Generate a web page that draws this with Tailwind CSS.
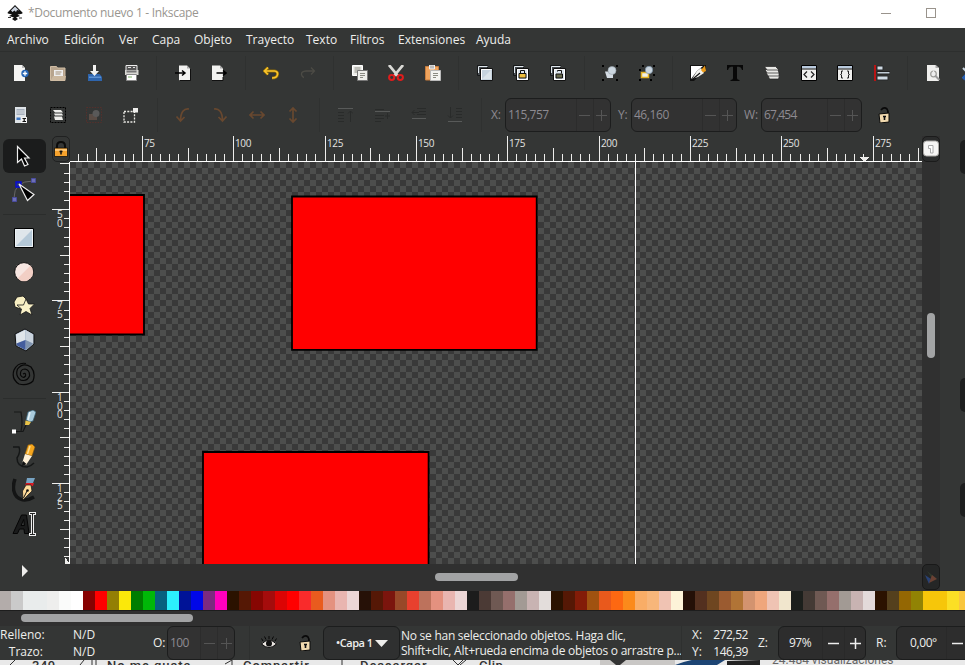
<!DOCTYPE html>
<html lang="es">
<head>
<meta charset="utf-8">
<title>Inkscape</title>
<script src="https://cdn.jsdelivr.net/npm/@tailwindcss/browser@4"></script>
</head>
<body class="w-[965px] h-[665px] overflow-hidden bg-[#343635] text-[#eeeeec] font-['Open_Sans','Noto_Sans',sans-serif] text-[12px] leading-[16px] flex flex-col whitespace-nowrap">

<!-- Title bar -->
<header class="h-[28px] shrink-0 bg-white flex items-center pl-[7px] text-[#999690]">
  <svg class="w-[16px] h-[16px] -mt-[3px]" viewBox="0 0 16 16"><path d="M8 0L15.500 7.500Q16 8.500 14 9L10.500 9.500L13 11L9 12.500L11 14L8 16L5 14L7 12.500L2 11L5 9.500L1 8.500Q0 8 1 7Z" fill="#111"/><path d="M8 1.500L12 5.500L10 5L9 7L7.500 5.500L5.500 7L4 5.500Z" fill="#cdd5e2"/><path d="M1 12h3v1h-3zM12 12.500h3v1h-3z" fill="#333"/></svg>
  <span class="ml-[5px] -mt-[2px] tracking-[-0.310px]">*Documento nuevo 1 - Inkscape</span>
  <svg class="w-[55px] h-[12px] ml-auto mr-[29px] -mt-[3px]" viewBox="0 0 55 12" fill="none" stroke="#99938c" shape-rendering="crispEdges"><path d="M0 6.500h10M45.500 1.500h9v9h-9z"/></svg>
</header>

<!-- Menu bar -->
<nav class="h-[24px] shrink-0 border-b border-[#2d2f2e] flex items-center pl-[7px] gap-[16px]">
  <span class="w-[41px]">Archivo</span><span class="w-[39px]">Edición</span><span class="w-[17px]">Ver</span><span class="w-[26px]">Capa</span><span class="w-[36px]">Objeto</span><span class="w-[44px]">Trayecto</span><span class="w-[28px]">Texto</span><span class="w-[32px]">Filtros</span><span class="w-[62px]">Extensiones</span><span>Ayuda</span>
</nav>

<!-- Command bar -->
<div class="h-[42px] shrink-0 flex items-center pl-[2.500px] [&>svg]:w-[16px] [&>svg]:h-[16px] [&>svg]:mx-[10.360px] [&>svg]:shrink-0 [&>i]:w-px [&>i]:h-[34px] [&>i]:mx-[7px] [&>i]:bg-[#2f3130] [&>i]:shrink-0">
  <svg viewBox="0 0 16 16"><path d="M1 0h8l3 3v13h-11z" fill="#f5f5f3"/><path d="M9 0v3h3z" fill="#bbb"/><circle cx="12" cy="8.500" r="3.700" fill="#2565b4"/><path d="M12 6.300v4.400M9.800 8.500h4.400" stroke="#fff" stroke-width="1.300"/></svg>
  <svg viewBox="0 0 16 16"><path d="M.5 1.500h6l1 1.500h7.500v12.500h-14.500z" fill="#b7a48d" stroke="#d0bda4"/><path d="M4 5h9v6h-9z" fill="#eee"/><path d="M5.500 7h6M5.500 9h5" stroke="#a3917a"/><path d="M1 15l2-4h13l-1 4z" fill="#cbb89f"/></svg>
  <svg viewBox="0 0 16 16"><path d="M2.500 9h11l2.500 3v4h-12v-4z" fill="#2e65ad"/><path d="M2 9l2 0v7h-2z" fill="#2e65ad"/><path d="M3 11.500h12v1.500h-12z" fill="#5c91d1"/><path d="M7 0h3v6h3l-4.500 5l-4.500-5h3z" fill="#f2f2f0"/></svg>
  <svg viewBox="0 0 16 16"><path d="M3 .5h11v5h-11z" fill="#555" stroke="#eee"/><path d="M5 2.500h3M10 2.500h2" stroke="#ddd"/><path d="M2 5h13.500v5h-13.500z" fill="#d8d8d3"/><path d="M3.500 5.500h10v2h-10z" fill="#777"/><path d="M3.500 9.500h10v6h-10z" fill="#fff" stroke="#888"/><path d="M5 12h4" stroke="#79b363"/></svg>
  <i></i>
  <svg viewBox="0 0 16 16"><path d="M4 .5h8l3 3v12h-11z" fill="#f2f2f0"/><path d="M12 .5v3h3z" fill="#aaa"/><path d="M15.500 4v11.500h-11" fill="none" stroke="#111"/><path d="M0 8h9M7 5.500l3 2.500l-3 2.500" stroke="#000" stroke-width="1.500" fill="none"/></svg>
  <svg viewBox="0 0 16 16"><path d="M1 .5h8l3 3v12h-11z" fill="#f2f2f0"/><path d="M9 .5v3h3z" fill="#aaa"/><path d="M12 12v3.500h-11" fill="none" stroke="#111"/><path d="M5.500 8h9M12 5.500l3 2.500l-3 2.500" stroke="#000" stroke-width="1.500" fill="none"/></svg>
  <i></i>
  <svg viewBox="0 0 16 16"><path d="M5 2.500L1.500 6L5 9.500M2 6h9.500Q15 6.500 14.500 9.500Q14 13 9 13" fill="none" stroke="#8d6a06" stroke-width="3"/><path d="M5 2.500L1.500 6L5 9.500M2 6h9.500Q15 6.500 14.500 9.500Q14 13 9 13" fill="none" stroke="#f9c32c" stroke-width="1.700"/></svg>
  <svg viewBox="0 0 16 16"><path d="M11 2.500L14.500 6L11 9.500M14 6h-8Q1 6.500 1.500 9.500Q2 12 4 12.500" fill="none" stroke="#4c4b45" stroke-width="1.300"/></svg>
  <i></i>
  <svg viewBox="0 0 16 16"><path d="M.5.500h10v10h-10z" fill="#eeeeea" stroke="#fff"/><path d="M2.500 3h6M2.500 5h6M2.500 7h4" stroke="#8b8b83"/><path d="M5.500 5.500h10v10h-10z" fill="#eeeeea" stroke="#777"/><path d="M8 8.500h5M8 10.500h5M8 12.500h3" stroke="#8b8b83"/></svg>
  <svg viewBox="0 0 16 16"><path d="M1 0L10 11M15 0L6 11" stroke="#dadad6" stroke-width="2.700"/><ellipse cx="3.700" cy="12.500" rx="2.600" ry="2.400" fill="none" stroke="#e01c1c" stroke-width="2"/><ellipse cx="12.300" cy="12.500" rx="2.600" ry="2.400" fill="none" stroke="#e01c1c" stroke-width="2"/></svg>
  <svg viewBox="0 0 16 16"><path d="M.5 1.500h13v13.500h-13z" fill="#efa35c" stroke="#c77d3e"/><path d="M4.500 0h5v4h-5z" fill="#bbb" stroke="#eee"/><path d="M5.500 5.500h10v10h-10z" fill="#f4f4f1" stroke="#bbb"/><path d="M8 8.500h5M8 10.500h5M8 12.500h3" stroke="#8b8b83"/></svg>
  <i></i>
  <svg viewBox="0 0 16 16"><path d="M.5.500h10v10h-10z" fill="#454a4e" stroke="#17191a"/><path d="M1.500 8v-6.500h9" fill="none" stroke="#dfe7ed"/><path d="M3.500 3.500h12v12h-12z" fill="#c6d3de" stroke="#111"/><path d="M4.500 14.500v-10h10" fill="none" stroke="#fff"/><path d="M5 14L14 5v9z" fill="#dbe4ea"/></svg>
  <svg viewBox="0 0 16 16"><path d="M.5.500h10v10h-10z" fill="#454a4e" stroke="#17191a"/><path d="M1.500 8v-6.500h9" fill="none" stroke="#dfe7ed"/><path d="M3.500 3.500h12v12h-12z" fill="#dce5ec" stroke="#111"/><path d="M4.500 14.500v-10h10v10z" fill="none" stroke="#fff"/><path d="M6 8.500h7v4.500h-7z" fill="#eebd3d" stroke="#111"/><path d="M7.500 8v-2.500h4v2.500" fill="none" stroke="#111"/></svg>
  <svg viewBox="0 0 16 16"><path d="M.5.500h10v10h-10z" fill="#454a4e" stroke="#17191a"/><path d="M1.500 8v-6.500h9" fill="none" stroke="#dfe7ed"/><path d="M3.500 3.500h12v12h-12z" fill="#dce5ec" stroke="#111"/><path d="M4.500 14.500v-10h10v10z" fill="none" stroke="#fff"/><path d="M6 9h6.500v4h-6.500z" fill="#686a4c" stroke="#111"/><path d="M7.500 6.500v-1h4v3" fill="none" stroke="#111"/></svg>
  <i></i>
  <svg viewBox="0 0 16 16"><path d="M0 0h2v2h-2zM14 0h2v2h-2zM0 14h2v2h-2zM14 14h2v2h-2z" fill="#000"/><path d="M3 6.500h8v6.500h-6z" fill="#d4dce3"/><circle cx="10" cy="5.500" r="4" fill="#cbd6df" stroke="#97a1a9" stroke-width=".6"/></svg>
  <svg viewBox="0 0 16 16"><path d="M3 0h2v2h-2zM14 0h2v2h-2zM0 4h2v2h-2zM0 14h2v2h-2zM11 14h2v2h-2zM14 9h2v2h-2z" fill="#000"/><path d="M2.500 7.500h7v5h-7z" fill="#f1f1e8" stroke="#e7b524" stroke-width="1.500"/><circle cx="10" cy="5" r="3.700" fill="#cbd6df" stroke="#718aa3" stroke-width=".6"/></svg>
  <i></i>
  <svg viewBox="0 0 16 16"><path d="M0 0h16v4L4 16H0z" fill="#111"/><path d="M1 1h12L7 6L1 14z" fill="#fff"/><path d="M2 14L7 6L11 3L14 8L8 12z" fill="#f3f3ef"/><path d="M11 5L15 .5L16 6L13 7.500z" fill="#ec9b18"/><path d="M1 15.500L10 8" stroke="#111" stroke-width="1.100"/></svg>
  <svg viewBox="0 0 16 16"><path d="M0 0h16v5h-1Q14.500 2 12 1.700h-2v11.500Q10 15 12.500 15v1h-9v-1Q6 15 6 13.200V1.700H4Q1.500 2 1 5H0z" fill="#080808"/></svg>
  <svg viewBox="0 0 16 16" fill="#e8e8e5" stroke="#222" stroke-width=".7"><path d="M4 10.500h11.500l-1 3.500h-9z"/><path d="M2 7.500h13l0 3.500h-11z"/><path d="M1 4.500h13l1 3.500h-12z"/><path d="M.5 1.500h11l3.500 3.500h-12z"/></svg>
  <svg viewBox="0 0 16 16"><path d="M.5.500h15v15h-15z" fill="#efefed" stroke="#000"/><path d="M1 1h14v2.500h-14z" fill="#b9cadd"/><path d="M0 4h16" stroke="#111"/><path d="M6 6.500L3 9.500l3 3M10 6.500l3 3l-3 3" fill="none" stroke="#222" stroke-width="1.200"/></svg>
  <svg viewBox="0 0 16 16"><path d="M.5.500h15v15h-15z" fill="#efefed" stroke="#000"/><path d="M1 1h14v2.500h-14z" fill="#b9cadd"/><path d="M0 4h16" stroke="#111"/><path d="M6 6h-1.500v3L3.500 9.500l1 .5v3H6M10 6h1.500v3l1 .5l-1 .5v3H10" fill="none" stroke="#222"/></svg>
  <svg viewBox="0 0 16 16"><path d="M1 0v16" stroke="#e40a0a" stroke-width="1.500"/><path d="M3 1h6v4h-6zM3 11h11v4h-11z" fill="#cfdae3" stroke="#27292a"/><path d="M3 6.500h13v2.500h-13z" fill="#c0ccd5" stroke="#222"/></svg>
  <i></i>
  <svg viewBox="0 0 16 16"><path d="M1 0h8.500l3.500 3v13h-12z" fill="#efefed"/><path d="M9.500 0v3h3.500z" fill="#aaa"/><circle cx="7.500" cy="9" r="2.800" fill="#eee" stroke="#9c9c98" stroke-width="1.200"/><path d="M9 10.500l4.500 4.500" stroke="#999" stroke-width="2"/><path d="M7.500 5.500v3" stroke="#eee" stroke-width="1.500"/></svg>
  <svg viewBox="0 0 16 16"><path d="M1 3L5 7L8 5" stroke="#cbd7e2" stroke-width="2"/><path d="M1 14L7 8" stroke="#2860b3" stroke-width="4"/></svg>
</div>

<!-- Tool controls -->
<div class="h-[42px] shrink-0 flex items-center pl-[2.500px] [&>svg]:w-[16px] [&>svg]:h-[16px] [&>svg]:mx-[10.400px] [&>svg]:shrink-0 [&>i]:w-px [&>i]:h-[34px] [&>i]:mx-[7px] [&>i]:bg-[#2f3130] [&>i]:shrink-0">
  <svg viewBox="0 0 16 16"><path d="M2 0h11v16h-11z" fill="#dfe4e8"/><path d="M3.500 2h8v6h-8z" fill="#a5afbb"/><path d="M3.500 4h8M3.500 6h8" stroke="#d7dce2"/><path d="M3.500 10.500h4v2.500h-4z" fill="#3e77c2"/><path d="M8 10h6v6h-6z" fill="#f3f3f3"/><path d="M9.500 11.500h3.500M9.500 14.500h3.500M11.200 11.500v3" stroke="#111" stroke-width="1.200"/></svg>
  <svg viewBox="0 0 16 16"><path d="M.5.500h15v15h-15z" fill="none" stroke="#000" stroke-dasharray="2 1"/><path d="M3 3h8l2 2.500h-8zM4 6.500h8l1 2h-8zM4 9.500h8l1 3.500h-8z" fill="#eeeeeb"/></svg>
  <svg viewBox="0 0 16 16"><path d="M.5.500h15v15h-15z" fill="none" stroke="#55302c" stroke-dasharray="1.500 1.200"/><path d="M3 7h8v6h-8z" fill="#5a4c45"/><circle cx="10" cy="6.500" r="3.500" fill="#595959"/></svg>
  <svg viewBox="0 0 16 16"><path d="M1 4.500h10.500v10.500h-10.500z" fill="none" stroke="#e9e9e4" stroke-width="1.300" stroke-dasharray="2 1.300"/><path d="M10 1h5v4.500h-5z" fill="#eeeeec"/></svg>
  <i></i>
  <svg viewBox="0 0 16 16" fill="none" stroke="#68482f" stroke-width="1.700"><path d="M14 2Q6 1 5.500 13M1.500 9.500L5.500 14L9.500 10"/></svg>
  <svg viewBox="0 0 16 16" fill="none" stroke="#68482f" stroke-width="1.700"><path d="M2 2Q10 1 10.500 13M6.500 10L10.500 14L14.500 9.500"/></svg>
  <svg viewBox="0 0 16 16" fill="none" stroke="#68482f" stroke-width="1.700"><path d="M1 8h14M4.500 4.500L1 8l3.500 3.500M11.500 4.500L15 8l-3.500 3.500"/></svg>
  <svg viewBox="0 0 16 16" fill="none" stroke="#68482f" stroke-width="1.700"><path d="M8 1v14M4.500 4.500L8 1l3.500 3.500M4.500 11.500L8 15l3.500-3.500"/></svg>
  <i></i>
  <svg viewBox="0 0 16 16" fill="none" stroke="#292b2a"><path d="M1 5.500h6M1 8.500h6M1 11.500h6M1 14.500h6M13.500 15v-11M11 6.500L13.500 4L16 6.500"/><path d="M1 1.500h15" stroke="#585a59"/></svg>
  <svg viewBox="0 0 16 16" fill="none" stroke="#292b2a"><path d="M1 2.500h9M1 8.500h9M1 11.500h9M1 14.500h6M11 9h5M13.500 6v6"/><path d="M1 4.500h15" stroke="#585a59"/></svg>
  <svg viewBox="0 0 16 16" fill="none" stroke="#292b2a"><path d="M6 1.500h9M8 4.500h7M6 7.500h9M1 5.500h7M3.500 3L1 5.500L3.500 8"/><path d="M1 11.500h14" stroke="#585a59"/></svg>
  <svg viewBox="0 0 16 16" fill="none" stroke="#292b2a"><path d="M9 1.500h6M9 4.500h6M9 7.500h6M9 10.500h6M3.500 0v11M1 8.500L3.500 11L6 8.500"/><path d="M1 14.500h14" stroke="#585a59"/></svg>
  <i></i>
  <div class="flex items-center text-[#8d8a91] shrink-0">
    <span class="w-[16px] pl-[2px]">X:</span>
    <div class="w-[106px] h-[34px] border border-[#1c1d1d] rounded-[6px] bg-[#323232] flex items-center"><span class="w-[70px] pl-[2px] tracking-[-0.500px]">115,757</span><b class="w-[17px] h-full border-l border-[#2c2c2c] grid place-items-center"><svg class="w-[11px] h-[11px]" viewBox="0 0 11 11"><path d="M0 5.500h11" stroke="#555"/></svg></b><b class="w-[17px] h-full border-l border-[#2c2c2c] grid place-items-center"><svg class="w-[11px] h-[11px]" viewBox="0 0 11 11"><path d="M0 5.500h11M5.500 0v11" stroke="#555"/></svg></b></div>
    <span class="w-[13px] ml-[7px]">Y:</span>
    <div class="w-[106px] h-[34px] border border-[#1c1d1d] rounded-[6px] bg-[#323232] flex items-center"><span class="w-[70px] pl-[2px] tracking-[-0.400px]">46,160</span><b class="w-[17px] h-full border-l border-[#2c2c2c] grid place-items-center"><svg class="w-[11px] h-[11px]" viewBox="0 0 11 11"><path d="M0 5.500h11" stroke="#555"/></svg></b><b class="w-[17px] h-full border-l border-[#2c2c2c] grid place-items-center"><svg class="w-[11px] h-[11px]" viewBox="0 0 11 11"><path d="M0 5.500h11M5.500 0v11" stroke="#555"/></svg></b></div>
    <span class="w-[17px] ml-[7px]">W:</span>
    <div class="w-[101px] h-[34px] border border-[#1c1d1d] rounded-[6px] bg-[#323232] flex items-center"><span class="w-[65px] pl-[2px] tracking-[-0.800px]">67,454</span><b class="w-[17px] h-full border-l border-[#2c2c2c] grid place-items-center"><svg class="w-[11px] h-[11px]" viewBox="0 0 11 11"><path d="M0 5.500h11" stroke="#555"/></svg></b><b class="w-[17px] h-full border-l border-[#2c2c2c] grid place-items-center"><svg class="w-[11px] h-[11px]" viewBox="0 0 11 11"><path d="M0 5.500h11M5.500 0v11" stroke="#555"/></svg></b></div>
  </div>
  <svg class="ml-[14px]!" viewBox="0 0 16 16"><path d="M5 3Q8-.5 11 2Q12 3 12 7" fill="none" stroke="#090909" stroke-width="1.700"/><path d="M3 7l10-1v9l-9 1z" fill="#f1d9ae" stroke="#0a0a0a"/><path d="M8.500 9v4M7 9.500h3" stroke="#111" stroke-width="1.600"/></svg>
</div>

<!-- Workspace -->
<main class="h-[454px] shrink-0 flex">
  <!-- Toolbox -->
  <aside class="w-[52px] shrink-0 pt-[3px] flex flex-col pl-[3px] [&>div]:w-[43px] [&>div]:pr-[1px] [&>div]:h-[34px] [&>div]:shrink-0 [&>div]:grid [&>div]:place-items-center [&>i]:w-[43px] [&>i]:h-px [&>i]:my-[6.500px] [&>i]:bg-[#2b2d2c] [&>i]:shrink-0 [&_svg]:w-[24px] [&_svg]:h-[24px]">
    <div class="bg-[#1b1c1c] rounded-[6px]"><svg viewBox="0 0 24 24"><path d="M5.500 2.500v16l4-3.500l3 7l3.500-1.500l-3.500-6.500h4.500z" fill="#000" stroke="#eee" stroke-width="1.200"/></svg></div>
    <div><svg viewBox="0 0 24 24"><path d="M2 20Q2 3 21 3" fill="none" stroke="#666"/><path d="M19.500 .5h4v4h-4zM.5 19.500h4v4h-4z" fill="#6d70b4" stroke="#4a4ca0"/><path d="M4 4h5v5h-5z" fill="#27337b" stroke="#0508e0" stroke-width="1.300"/><path d="M7 6l8.500 16.500l6.500-6z" fill="#000" stroke="#eee" stroke-width="1.200"/></svg></div>
    <i></i>
    <div><svg viewBox="0 0 24 24"><path d="M2.500 2.500h19v19h-19z" fill="#b5c9d8" stroke="#000"/><path d="M4 20V4h16z" fill="#dfe6eb"/><path d="M3.500 20.500V3.500h17v17z" fill="none" stroke="#edf2f5"/></svg></div>
    <div><svg viewBox="0 0 24 24"><circle cx="12" cy="12" r="9.400" fill="#f7e6e1" stroke="#111"/><path d="M5.500 18.500L18.500 5.500A9 9 0 0 1 5.500 18.500" fill="#f2cfc5"/></svg></div>
    <div><svg viewBox="0 0 24 24"><path d="M2 8l3-5l6-1l4 4l-1 6l-5 3l-6-2z" fill="#f7eec2" stroke="#111" stroke-width=".8"/><path d="M14 5l2.500 5h6l-4.500 4.500l2 6.500l-6-3.500l-6 3.500l1.500-6l-4.500-4h6.500z" fill="#faf2c8" stroke="#181818" stroke-width=".8"/></svg></div>
    <div><svg viewBox="0 0 24 24"><path d="M3 6l10-5l9 5v10l-8 7l-10-5z" fill="#a9b9cc" stroke="#111"/><path d="M4 6.500l9-4.500v10l-8.500 3.500z" fill="#dfe5ea"/><path d="M13.500 2l7.500 4.500v9l-7.500-3.500z" fill="#c9d3dd"/><path d="M13.500 12l7.500 3.500l-7 6.500z" fill="#7f93ae"/><path d="M4.500 15.500l9-3.500l0 10l-8.500-4.500z" fill="#445d9d"/></svg></div>
    <div><svg viewBox="0 0 24 24"><path d="M11 12Q14 10 13.500 14Q11 17 8.500 13Q8 7 13 7Q18 8 17.500 14Q15 20 8.500 18Q3 14 5.500 7Q11 0 19 5Q24 11 21 19Q16 24 7 22Q-1 17 2 8Q6 0 14 1.500" fill="none" stroke="#080808" stroke-width="1.200"/></svg></div>
    <i></i>
    <div><svg viewBox="0 0 24 24"><path d="M2 2h7Q11 14 9 21M3 21.500h8L14 15" fill="none" stroke="#161818" stroke-width="1.200"/><path d="M0 19.500h4v4h-4z" fill="#fff"/><path d="M14 10l2-8l5-2l3 2l-3 9l-3 1z" fill="#a9cbdc" stroke="#375d71" stroke-width=".7"/><path d="M18 2l-2 8" stroke="#e4f1f7" stroke-width="1.500"/><path d="M13.500 10.500l5.500 1.500l-2 3h-4z" fill="#e9c348"/></svg></div>
    <div><svg viewBox="0 0 24 24"><path d="M1 3h6Q9 8 5 14Q5 23 15 23Q19 22 22 19" fill="none" stroke="#151717" stroke-width="1.500"/><path d="M16 1l4-1l3 3l-3 9l-7-2z" fill="#f5a61e" stroke="#7c5413" stroke-width=".6"/><path d="M13 10l7 2l-6 9l-3.500-3z" fill="#fff1d7"/><path d="M11 17l-1 5l4.500-2z" fill="#111"/><path d="M18 2l-2.500 8" stroke="#ffdf93" stroke-width="1.500"/></svg></div>
    <div><svg viewBox="0 0 24 24"><path d="M3 1Q-1 12 5 19Q12 25 22 19" fill="none" stroke="#141515" stroke-width="3.500"/><path d="M15 0h8l-2 5h-7z" fill="#77a3c3"/><path d="M14 5h8l-1 3h-8z" fill="#d81c24"/><path d="M14 7h5l1 6l-9 9l-.5-9z" fill="#ffdc9a" stroke="#111" stroke-width=".7"/><path d="M11.500 20l3.500-7" stroke="#111"/><circle cx="15.500" cy="12.500" r="1.300" fill="#111"/></svg></div>
    <div><svg viewBox="0 0 24 24"><path d="M1 21.500L9.500 3h5l2.500 18.500h-4.500l-.5-4.500H7.500l-2 4.500zM9 13.500h3.500l-.8-6z" fill="#1a1b1b" stroke="#050505" fill-rule="evenodd"/><path d="M17 1.500h7M17 22.500h7M20.500 1v22" stroke="#eee" stroke-width="3"/><path d="M18 1.500h5M18 22.500h5M20.500 1v22" stroke="#222"/></svg></div>
    <div class="mt-[13px]"><svg viewBox="0 0 24 24"><path d="M10 6v12l6-6z" fill="#eeeeec"/></svg></div>
  </aside>

  <!-- Rulers and canvas -->
  <section class="w-[870px] shrink-0 flex flex-col">
    <div class="h-[26px] flex shrink-0">
      <div class="w-[18px] h-[26px] border border-[#202121] rounded-[5px] grid place-items-center"><svg class="w-[14px] h-[16px]" viewBox="0 0 14 16"><path d="M3 8V5Q3 1 7 1T11 5V8" fill="none" stroke="#0b0b0b" stroke-width="2"/><path d="M.5 7h13v8.500h-13z" fill="#f6a22c" stroke="#111" stroke-width=".8"/><path d="M1 9h12" stroke="#ffd18b" stroke-width="1.500"/><path d="M7 9.500v4M5.500 10.500h3" stroke="#111" stroke-width="1.500"/></svg></div>
      <svg id="hruler" class="w-[852px] h-[26px]" viewBox="70 136 852 26" shape-rendering="crispEdges"></svg>
    </div>
    <div class="h-[402px] flex shrink-0">
      <svg id="vruler" class="w-[18px] h-[402px]" viewBox="52 162 18 402" shape-rendering="crispEdges"></svg>
      <svg class="w-[852px] h-[402px]" viewBox="70 162 852 402">
        <defs><pattern id="check" x="70" y="162" width="12" height="12" patternUnits="userSpaceOnUse" shape-rendering="crispEdges"><path d="M0 0h12v12h-12z" fill="#393939"/><path d="M6 0h6v6h-6zM0 6h6v6h-6z" fill="#4d4e4d"/></pattern></defs>
        <path d="M70 162h852v402h-852z" fill="url(#check)"/>
        <g fill="#f00" stroke="#000" stroke-width="1.800"><path d="M60 195h84v139.500h-84zM292 196.500h244.700v153.300h-244.700zM203 452h225.600v130h-225.600z"/></g>
        <path d="M635.500 162v402" stroke="#fff" shape-rendering="crispEdges"/>
      </svg>
    </div>
    <div class="h-[26px] ml-[18px] bg-[#303030] relative"><div class="absolute left-[365px] top-[9px] w-[83px] h-[8px] rounded-full bg-[#a2a3a4]"></div></div>
  </section>
  <div class="w-[18px] shrink-0 bg-[#303030] flex flex-col">
    <div class="h-[26px] bg-[#2b2c2c] border border-[#1b1b1b] rounded-[5px] grid place-items-center"><svg class="w-[16px] h-[18px]" viewBox="0 0 16 18"><rect x=".5" y="1" width="15" height="15" rx="3" fill="#f6f5f4" stroke="#a9a7a4"/><path d="M5.500 5.500h4.500v7.500h-2.500v-4.500h-2z" fill="#fff" stroke="#aaa"/></svg></div>
    <div class="w-[8px] h-[45px] ml-[5px] mt-[151px] rounded-full bg-[#a2a3a4]"></div>
    <div class="mt-auto h-[26px] bg-[#252626] border border-[#191919] rounded-[5px] grid place-items-center"><svg class="w-[14px] h-[14px]" viewBox="0 0 14 14"><path d="M3 1l9 7l-5-1z" fill="#303a2e"/><path d="M1 5l6 4l-2 5z" fill="#294275"/><path d="M8 5l5 4l-8 4z" fill="#6a4133"/></svg></div>
  </div>
  <div class="w-[25px] flex flex-col items-end pt-[4px] [&>div]:w-[5px] [&>div]:h-[34px] [&>div]:bg-[#1d1e1e] [&>div]:rounded-l-[6px]"><div></div><div class="mt-[204px]"></div><div class="mt-[71px]"></div></div>
</main>

<!-- Palette -->
<div id="palette" class="h-[21px] shrink-0 flex pt-px bg-[#303030] border-b border-[#1d1d1d] overflow-hidden"></div>
<div class="h-[15px] shrink-0 bg-[#303030] relative"><div class="absolute left-[21px] top-[3px] w-[172px] h-[8px] rounded-full bg-[#a2a3a4]"></div></div>

<!-- Status bar -->
<footer class="h-[34px] shrink-0 flex items-center overflow-hidden [&>*]:shrink-0">
  <div class="w-[43px] text-right leading-[17px]">Relleno:<br>Trazo:</div>
  <div class="w-[110px] pl-[30px] leading-[17px]">N/D<br>N/D</div>
  <span class="w-[14px]">O:</span>
  <div class="w-[68px] h-[34px] border border-[#1c1d1d] rounded-[6px] bg-[#323232] flex items-center text-[#8d8a91]"><span class="w-[32px] pl-[2px] tracking-[-0.600px]">100</span><b class="w-[17px] h-full border-l border-[#2c2c2c] grid place-items-center"><svg class="w-[11px] h-[11px]" viewBox="0 0 11 11"><path d="M0 5.500h11" stroke="#555"/></svg></b><b class="w-[17px] h-full border-l border-[#2c2c2c] grid place-items-center"><svg class="w-[11px] h-[11px]" viewBox="0 0 11 11"><path d="M0 5.500h11M5.500 0v11" stroke="#555"/></svg></b></div>
  <i class="w-px h-[34px] bg-[#2e302f] ml-[14px] mr-[11px]"></i>
  <svg class="w-[16px] h-[16px]" viewBox="0 0 16 16"><path d="M.5 9Q8 1.500 15.500 9Q8 16 .5 9" fill="#e8e4e0" stroke="#0b0b0b"/><circle cx="8" cy="8.500" r="3" fill="#111"/><path d="M2 6L.5 3.500M5 4.500L3.500 1.500M8 4V1M11 4.500L12.500 1.500M14 6L15.500 3.500" stroke="#070707"/></svg>
  <svg class="w-[16px] h-[16px] ml-[20px]" viewBox="0 0 16 16"><path d="M5 3Q8-.5 11 2Q12 3 12 7" fill="none" stroke="#090909" stroke-width="1.700"/><path d="M3 7l10-1v9l-9 1z" fill="#f1d9ae" stroke="#0a0a0a"/><path d="M8.500 9v4M7 9.500h3" stroke="#111" stroke-width="1.600"/></svg>
  <div class="w-[77px] h-[34px] ml-[10px] border border-[#1c1d1d] rounded-[6px] bg-[#2f3030] flex items-center pl-[12px] text-[11px] font-semibold"><span class="w-[37px] tracking-[-0.450px]">•Capa 1</span><svg class="w-[13px] h-[7px] ml-[2px]" viewBox="0 0 13 7"><path d="M0 0h13l-6.500 7z" fill="#eeeeec"/></svg></div>
  <div class="w-[281px] pl-px leading-[15px]"><span class="tracking-[-0.260px]">No se han seleccionado objetos. Haga clic,</span><br><span class="tracking-[-0.240px]">Shift+clic, Alt+rueda encima de objetos o arrastre p...</span></div>
  <i class="w-px h-[34px] bg-[#2e302f]"></i>
  <div class="w-[23px] pl-[10px] leading-[17px]">X:<br>Y:</div>
  <div class="w-[43px] text-right leading-[17px] tracking-[-0.450px]">272,52<br>146,39</div>
  <span class="w-[30px] pl-[10px]">Z:</span>
  <div class="w-[88px] h-[34px] border border-[#1c1d1d] rounded-[6px] bg-[#2d2d2d] flex items-center"><span class="w-[43px] pl-[10px] tracking-[-0.500px]">97%</span><b class="w-[22px] h-full border-l border-[#292929] grid place-items-center"><svg class="w-[11px] h-[11px]" viewBox="0 0 11 11"><path d="M0 5.500h11" stroke="#eee" stroke-width="1.500"/></svg></b><b class="w-[21px] h-full border-l border-[#292929] grid place-items-center"><svg class="w-[11px] h-[11px]" viewBox="0 0 11 11"><path d="M0 5.500h11M5.500 0v11" stroke="#eee" stroke-width="1.500"/></svg></b></div>
  <span class="w-[30px] pl-[10px]">R:</span>
  <div class="w-[90px] h-[34px] border border-[#1c1d1d] rounded-[6px] bg-[#2d2d2d] flex items-center"><span class="w-[49px] pl-[13px] tracking-[-0.400px]">0,00°</span><b class="w-[22px] h-full border-l border-[#292929] grid place-items-center"><svg class="w-[11px] h-[11px]" viewBox="0 0 11 11"><path d="M0 5.500h11" stroke="#eee" stroke-width="1.500"/></svg></b></div>
</footer>

<!-- Page behind the window -->
<div class="h-[5px] shrink-0 overflow-hidden relative bg-[#e9e9e9] text-[#333] font-[Roboto,sans-serif] font-medium text-[13px] leading-[14px]">
  <svg class="absolute left-0 top-0 w-[965px] h-[5px]" viewBox="0 0 965 5"><path d="M10 5l5-5M92 0v5M96 0v5M80 5l4-5M225 4l7-4v5M342 0v5M453 0l5 5l5-5M460 5l6-5" stroke="#333" fill="none"/><path d="M600 0h75v5h-75z" fill="#c9c7c5"/><path d="M610 0h16l-6 5h-4z" fill="#333"/><path d="M675 5q25-10 50-5l-8 5z" fill="#1c4473"/><path d="M727 5v-4l33-1v5z" fill="#222"/></svg>
  <span class="absolute left-[32px] top-[-1px] tracking-[0.500px]">349</span><span class="absolute left-[107px] top-[-1px] tracking-[0.950px]">No me gusta</span><span class="absolute left-[243px] top-[-1px] tracking-[0.900px]">Compartir</span><span class="absolute left-[360px] top-[-1px] tracking-[0.900px]">Descargar</span><span class="absolute left-[479px] top-[-1px] tracking-[0.500px]">Clip</span><span class="absolute left-[772px] top-[-7px] text-[12px] font-normal text-[#666]">24.484 visualizaciones</span>
</div>

<script>
  const NS = 'http://www.w3.org/2000/svg';
  function el(parent, tag, attrs, text) {
    const e = document.createElementNS(NS, tag);
    for (const k in attrs) e.setAttribute(k, attrs[k]);
    if (text) e.textContent = text;
    parent.appendChild(e);
  }
  const labelStyle = { fill: '#e4e4e2', 'font-size': 10, 'letter-spacing': -0.35, 'font-family': 'Open Sans, sans-serif' };

  // Horizontal ruler: a labelled tick each 25 units, ten divisions between labels
  const h = document.getElementById('hruler');
  for (let i = -8; i < 86; i++) {
    const x = Math.floor(142.4 + i * 9.134);
    const len = i % 10 === 0 ? 25 : i % 5 === 0 ? 13 : 7;
    if (x >= 70 && x < 922) el(h, 'rect', { x, y: 161 - len, width: 1, height: len, fill: '#eeeeec' });
    if (i >= 0 && i % 10 === 0) el(h, 'text', { x: x + 2, y: 146.5, ...labelStyle }, String(75 + i * 2.5));
  }
  el(h, 'rect', { x: 70, y: 161, width: 852, height: 1, fill: '#fff' });
  el(h, 'path', { d: 'M859 157h10l-5 5z', fill: '#eeeeec' });

  // Vertical ruler, digits stacked one under another
  const v = document.getElementById('vruler');
  for (let i = -5; i < 39; i++) {
    const y = Math.floor(209.6 + i * 9.134);
    const len = i % 10 === 0 ? 17 : i % 5 === 0 ? 9 : 5;
    if (y < 564) el(v, 'rect', { x: 69 - len, y, width: len, height: 1, fill: '#eeeeec' });
    if (i >= 0 && i % 10 === 0) String(50 + i * 2.5).split('').forEach((c, n) =>
      el(v, 'text', { x: 57, y: y + 9 + n * 8.7, ...labelStyle }, c));
  }
  el(v, 'rect', { x: 69, y: 162, width: 1, height: 402, fill: '#fff' });
  el(v, 'path', { d: 'M65 557v7h5z', fill: '#eeeeec' });

  // Swatches
  const colours = '#b3acaa #cacaca #e9ecec #e9ecec #eeeeed #fafbfa #ffffff #870202 #ff0000 #937f04 #fbe80a #007d00 #00b808 #07607f #2ceffc #001397 #0007e8 #7c2a80 #ff00bd #2b1200 #551805 #870602 #a50c0c #dc0404 #ff0000 #f92b2b #e95b1e #e4917f #e9b5b0 #ecd6d6 #261107 #551806 #7b150d #984828 #e8402e #bd725c #e4917f #e9b5b0 #ecd6d6 #1c1c1c #4b3a35 #6f5953 #956f6c #a29a94 #c8b3b2 #e3dddb #2b1200 #551805 #831c08 #a05210 #e9591c #fd6812 #fb8a1b #f9ad66 #f7b67a #f0c3b3 #fdf3d8 #241007 #53301f #6e4620 #9b5b30 #b17436 #d3936f #efa67c #efc3b3 #f1e6cd #1c1f1c #443a35 #6f5953 #956f6c #a29a94 #c8b3b2 #e3dada #2b1200 #54401d #946703 #918304 #f6c60a #f6c60a #fbdf25 #f9c63d'.split(' ');
  const palette = document.getElementById('palette');
  colours.forEach((c, i) => {
    const s = document.createElement('div');
    s.className = i ? 'w-[12px] shrink-0' : 'w-[11px] shrink-0';
    s.style.background = c;
    palette.appendChild(s);
  });
</script>
</body>
</html>
